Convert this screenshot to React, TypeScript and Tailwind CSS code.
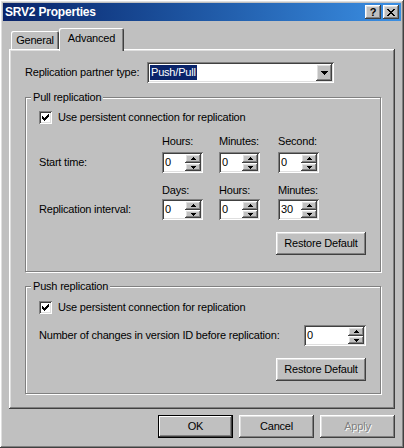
import React from 'react';

const raised =
  'shadow-[inset_-1px_-1px_#404040,inset_1px_1px_#ffffff,inset_-2px_-2px_#808080,inset_2px_2px_#dfdfdf]';
const sunken =
  'shadow-[inset_1px_1px_#808080,inset_-1px_-1px_#ffffff,inset_2px_2px_#404040,inset_-2px_-2px_#dfdfdf]';

function UpArrow() {
  return (
    <svg width="5" height="3" viewBox="0 0 5 3" shapeRendering="crispEdges">
      <rect x="2" y="0" width="1" height="1" fill="#000" />
      <rect x="1" y="1" width="3" height="1" fill="#000" />
      <rect x="0" y="2" width="5" height="1" fill="#000" />
    </svg>
  );
}

function DownArrow() {
  return (
    <svg width="5" height="3" viewBox="0 0 5 3" shapeRendering="crispEdges">
      <rect x="0" y="0" width="5" height="1" fill="#000" />
      <rect x="1" y="1" width="3" height="1" fill="#000" />
      <rect x="2" y="2" width="1" height="1" fill="#000" />
    </svg>
  );
}

function Spin({ value, className }: { value: string; className: string }) {
  return (
    <div className={`flex h-[21px] bg-white p-[2px] ${sunken} ${className}`}>
      <div className="flex-1 pl-[1px] leading-[17px]">{value}</div>
      <div className="flex w-[16px] flex-col">
        <div className={`flex h-[9px] items-center justify-center bg-[#c0c0c0] ${raised}`}>
          <UpArrow />
        </div>
        <div className={`flex flex-1 items-center justify-center bg-[#c0c0c0] ${raised}`}>
          <DownArrow />
        </div>
      </div>
    </div>
  );
}

function CheckBox() {
  return (
    <div className={`flex h-[13px] w-[13px] items-center justify-center bg-white ${sunken}`}>
      <svg width="7" height="7" viewBox="0 0 7 7" shapeRendering="crispEdges">
        <path d="M0 2h1v1h1v1h1v-1h1v-1h1v-1h1v-1h1v3h-1v1h-1v1h-1v1h-1v1h-1v-1h-1v-1h-1z" fill="#000" />
      </svg>
    </div>
  );
}

function Button({ children, variant }: { children: React.ReactNode; variant?: 'default' | 'disabled' }) {
  if (variant === 'default') {
    return (
      <div className="flex h-[23px] w-[75px] items-center justify-center bg-[#c0c0c0] shadow-[inset_0_0_0_1px_#000000,inset_-2px_-2px_#404040,inset_2px_2px_#ffffff,inset_-3px_-3px_#808080]">
        {children}
      </div>
    );
  }
  if (variant === 'disabled') {
    return (
      <div className={`flex h-[23px] w-[75px] items-center justify-center bg-[#c0c0c0] text-[#808080] [text-shadow:1px_1px_0_#ffffff] ${raised}`}>
        {children}
      </div>
    );
  }
  return (
    <div className={`flex h-[23px] w-[75px] items-center justify-center bg-[#c0c0c0] ${raised}`}>{children}</div>
  );
}

function RestoreButton() {
  return (
    <div className={`flex h-[23px] w-[90px] items-center justify-center bg-[#c0c0c0] ${raised}`}>
      Restore Default
    </div>
  );
}

const etched =
  'border border-[#808080] shadow-[inset_1px_1px_#ffffff,1px_1px_#ffffff]';

export default function App() {
  return (
    <div
      className={`flex h-[448px] w-[404px] flex-col bg-[#c0c0c0] p-[3px] font-['Liberation_Sans',Arial,sans-serif] text-[11px] leading-[13px] tracking-[-0.2px] text-black ${raised}`}
    >
      {/* title bar */}
      <div className="flex h-[18px] items-center bg-linear-to-r from-[#0a246a] to-[#3b8fe3] pl-[2px] pr-[2px]">
        <span className="flex-1 text-[12px] font-bold text-white">SRV2 Properties</span>
        <div className={`flex h-[14px] w-[16px] items-center justify-center bg-[#c0c0c0] text-[11px] font-bold leading-none ${raised}`}>
          ?
        </div>
        <div className={`ml-[2px] flex h-[14px] w-[16px] items-center justify-center bg-[#c0c0c0] ${raised}`}>
          <svg width="8" height="7" viewBox="0 0 8 7" shapeRendering="crispEdges">
            <path d="M0 0h2v1h1v1h2v-1h1v-1h2v1h-1v1h-1v1h-1v1h1v1h1v1h1v1h-2v-1h-1v-1h-2v1h-1v1h-2v-1h1v-1h1v-1h1v-1h-1v-1h-1v-1h-1z" fill="#000" />
          </svg>
        </div>
      </div>

      <div className="px-[6px] pt-[7px]">
        {/* tabs */}
        <div className="flex h-[21px] items-end pl-[2px]">
          <div className="flex h-[18px] w-[48px] items-center justify-center rounded-t-[2px] shadow-[inset_1px_1px_#ffffff,inset_-1px_0_#404040,inset_-2px_0_#808080]">
            General
          </div>
          <div className="relative z-10 -mb-[2px] flex h-[23px] w-[65px] items-start justify-center rounded-t-[2px] bg-[#c0c0c0] pt-[4px] shadow-[inset_1px_1px_#ffffff,inset_-1px_0_#404040,inset_-2px_0_#808080]">
            Advanced
          </div>
        </div>

        {/* panel */}
        <div className={`h-[360px] pl-[16px] pr-[14px] pt-[13px] ${raised}`}>
          <div className="flex items-center">
            <span className="w-[122px]">Replication partner type:</span>
            <div className={`flex h-[21px] w-[187px] bg-white p-[2px] ${sunken}`}>
              <div className="flex-1 pl-[1px] pt-[1px]">
                <span className="inline-block bg-[#0a246a] px-[1px] leading-[15px] text-white">Push/Pull</span>
              </div>
              <div className={`flex w-[16px] items-center justify-center bg-[#c0c0c0] ${raised}`}>
                <svg width="7" height="4" viewBox="0 0 7 4" shapeRendering="crispEdges">
                  <path d="M0 0h7v1h-1v1h-1v1h-1v1h-1v-1h-1v-1h-1v-1h-1z" fill="#000" />
                </svg>
              </div>
            </div>
          </div>

          <fieldset className={`mt-[8px] p-0 ${etched}`}>
            <legend className="ml-[5px] bg-[#c0c0c0] px-[2px]">Pull replication</legend>
            <div className="pb-[16px] pl-[13px] pr-[14px] pt-[7px]">
              <div className="flex items-center gap-[6px]">
                <CheckBox />
                <span>Use persistent connection for replication</span>
              </div>
              <div className="mt-[11px] grid grid-cols-[123px_57px_59px_41px]">
                <span />
                <span>Hours:</span>
                <span>Minutes:</span>
                <span>Second:</span>
                <span className="mt-[4px] self-center">Start time:</span>
                <Spin value="0" className="mt-[4px] w-[41px]" />
                <Spin value="0" className="mt-[4px] w-[41px]" />
                <Spin value="0" className="mt-[4px] w-[41px]" />
                <span className="mt-[11px]" />
                <span className="mt-[11px]">Days:</span>
                <span className="mt-[11px]">Hours:</span>
                <span className="mt-[11px]">Minutes:</span>
                <span className="mt-[2px] self-center">Replication interval:</span>
                <Spin value="0" className="mt-[2px] w-[41px]" />
                <Spin value="0" className="mt-[2px] w-[41px]" />
                <Spin value="30" className="mt-[2px] w-[41px]" />
              </div>
              <div className="mt-[12px] flex justify-end">
                <RestoreButton />
              </div>
            </div>
          </fieldset>

          <fieldset className={`mt-[8px] p-0 ${etched}`}>
            <legend className="ml-[5px] bg-[#c0c0c0] px-[2px]">Push replication</legend>
            <div className="pb-[12px] pl-[13px] pr-[14px] pt-[8px]">
              <div className="flex items-center gap-[6px]">
                <CheckBox />
                <span>Use persistent connection for replication</span>
              </div>
              <div className="mt-[11px] flex items-center justify-between">
                <span>Number of changes in version ID before replication:</span>
                <Spin value="0" className="w-[62px]" />
              </div>
              <div className="mt-[12px] flex justify-end">
                <RestoreButton />
              </div>
            </div>
          </fieldset>
        </div>
      </div>

      {/* dialog buttons */}
      <div className="mt-[6px] flex justify-end gap-[6px] pr-[6px]">
        <Button variant="default">OK</Button>
        <Button>Cancel</Button>
        <Button variant="disabled">Apply</Button>
      </div>
    </div>
  );
}
